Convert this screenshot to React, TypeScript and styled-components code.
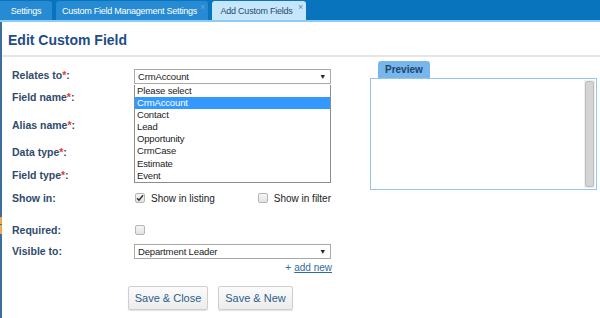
import React from "react";
import styled, { createGlobalStyle } from "styled-components";

const GlobalStyle = createGlobalStyle`
    body {
        margin: 0;
        font-family: "Liberation Sans", Arial, sans-serif;
        background: #ffffff;
    }
`;

const Page = styled.div`
    width: 600px;
    height: 318px;
    overflow: hidden;
    display: flex;
    flex-direction: column;
`;

const TabBar = styled.div`
    height: 20px;
    background: #0874bd;
    display: flex;
    align-items: flex-end;
    gap: 4px;
    border-bottom: 2px solid #8ccbf3;
`;

const Tab = styled.div<{ $active?: boolean; $w: number; $close?: boolean }>`
    width: ${(p) => p.$w}px;
    height: 19px;
    padding: ${(p) => (p.$close ? "1px 5px 0 0" : "1px 0 0 0")};
    box-sizing: border-box;
    display: flex;
    align-items: center;
    justify-content: center;
    position: relative;
    border-radius: 3px 3px 0 0;
    font-size: 9px;
    letter-spacing: -0.25px;
    white-space: nowrap;
    color: ${(p) => (p.$active ? "#2b4a6b" : "#ffffff")};
    background: ${(p) => (p.$active ? "#c6e7fb" : "#268bd2")};
    &:first-child {
        border-radius: 0 3px 0 0;
    }
`;

const TabClose = styled.span<{ $active?: boolean }>`
    position: absolute;
    top: 1px;
    right: 3px;
    font-size: 9px;
    color: ${(p) => (p.$active ? "#5d8ab0" : "#6aa7d6")};
`;

const Main = styled.div`
    flex: 1;
    border-left: 2px solid;
    border-image: linear-gradient(
            to bottom,
            #3d6d9c 0 195px,
            #f0a848 195px 202px,
            #3d6d9c 202px 203px,
            #f0a848 203px 212px,
            #3d6d9c 212px
        )
        1;
    display: flex;
    flex-direction: column;
`;

const Header = styled.div`
    height: 35px;
    box-sizing: border-box;
    padding: 2px 0 0 6px;
    border-bottom: 2px solid #e6e6e6;
    display: flex;
    align-items: center;
`;

const Title = styled.h1`
    margin: 0;
    font-size: 14px;
    font-weight: bold;
    color: #1f4d86;
`;

const Body = styled.div`
    display: grid;
    grid-template-columns: 358px 227px;
    padding-left: 10px;
`;

const Form = styled.div`
    display: flex;
    flex-direction: column;
    padding-top: 7px;
    position: relative;
`;

const Row = styled.div<{ $h: number; $mt?: number }>`
    height: ${(p) => p.$h}px;
    margin-top: ${(p) => p.$mt ?? 0}px;
    display: grid;
    grid-template-columns: 122px 197px;
    align-items: center;
`;

const Label = styled.label`
    font-size: 10.5px;
    font-weight: bold;
    color: #2f4b6b;
`;

const Star = styled.span`
    color: #e8352e;
`;

const Select = styled.div<{ $w?: number; $mt?: number }>`
    width: ${(p) => p.$w ?? 197}px;
    height: 15px;
    margin-top: ${(p) => p.$mt ?? 0}px;
    box-sizing: border-box;
    border: 1px solid #a9a9a9;
    background: #ffffff;
    display: flex;
    align-items: center;
    justify-content: space-between;
    padding: 0 4px 0 3px;
    font-size: 9.5px;
    letter-spacing: -0.15px;
    color: #222;
`;

const Arrow = styled.span`
    font-size: 7px;
    color: #222;
`;

const TextInput = styled.div`
    width: 197px;
    height: 15px;
    box-sizing: border-box;
    border: 1px solid #a9a9a9;
`;

const DropList = styled.ul`
    position: absolute;
    top: 28px;
    left: 122px;
    width: 197px;
    box-sizing: border-box;
    margin: 0;
    padding: 0;
    list-style: none;
    background: #ffffff;
    border: 1px solid #8c8c8c;
    border-top: none;
    z-index: 2;
`;

const DropItem = styled.li<{ $sel?: boolean }>`
    height: 12.1px;
    line-height: 12px;
    padding-left: 2px;
    font-size: 9.5px;
    letter-spacing: -0.15px;
    color: ${(p) => (p.$sel ? "#ffffff" : "#222")};
    background: ${(p) => (p.$sel ? "#3399ff" : "transparent")};
`;

const Checks = styled.div`
    display: flex;
    align-items: center;
    justify-content: space-between;
`;

const CheckLabel = styled.span`
    display: flex;
    align-items: center;
    gap: 6px;
    font-size: 10px;
    color: #222;
`;

const Box = styled.span`
    width: 10px;
    height: 10px;
    box-sizing: border-box;
    border: 1px solid #b5b5b5;
    border-radius: 2px;
    background: linear-gradient(#f6f6f6, #e2e2e2);
    display: inline-flex;
    align-items: center;
    justify-content: center;
    margin-left: 1px;
`;

const AddNew = styled.div`
    height: 12px;
    width: 320px;
    display: flex;
    align-items: center;
    justify-content: flex-end;
    gap: 3px;
    font-size: 10px;
    color: #2f6b9f;
    span:last-child {
        text-decoration: underline;
    }
`;

const Buttons = styled.div`
    display: flex;
    gap: 10px;
    margin-top: 13px;
    padding-left: 116px;
`;

const Button = styled.button<{ $w: number }>`
    width: ${(p) => p.$w}px;
    height: 24px;
    font-family: "Liberation Sans", Arial, sans-serif;
    font-size: 11px;
    color: #2e5e8e;
    border: 1px solid #cfcfcf;
    border-radius: 2px;
    background: linear-gradient(#fbfbfb, #ececec);
    box-shadow: 0 1px 1px rgba(0, 0, 0, 0.12);
    padding: 0;
`;

const Preview = styled.div`
    display: flex;
    flex-direction: column;
    padding-top: 4px;
`;

const PreviewTab = styled.div`
    align-self: flex-start;
    margin-left: 8px;
    height: 17px;
    padding: 0 7px;
    display: flex;
    align-items: center;
    background: #79b6ec;
    border-radius: 3px 3px 0 0;
    font-size: 10px;
    font-weight: bold;
    color: #1c4670;
`;

const PreviewBox = styled.div`
    height: 112px;
    box-sizing: border-box;
    border: 1px solid #92c6f3;
    display: flex;
    justify-content: flex-end;
    padding: 1px;
`;

const Track = styled.div`
    width: 11px;
    background: #f0f0f0;
    display: flex;
    padding: 1px;
    box-sizing: border-box;
`;

const Thumb = styled.div`
    flex: 1;
    background: #d4d4d4;
    border: 1px solid #bdbdbd;
    border-radius: 2px;
`;

const options = ["Please select", "CrmAccount", "Contact", "Lead", "Opportunity", "CrmCase", "Estimate", "Event"];

function Check() {
    return (
        <svg width="8" height="8" viewBox="0 0 8 8">
            <path d="M1 4.2 L3 6.3 L7 1.2" stroke="#333" strokeWidth="1.4" fill="none" />
        </svg>
    );
}

export default function App() {
    return (
        <Page>
            <GlobalStyle />
            <TabBar>
                <Tab $w={52}>Settings</Tab>
                <Tab $w={152} $close>
                    Custom Field Management Settings
                    <TabClose>×</TabClose>
                </Tab>
                <Tab $w={94} $active $close>
                    Add Custom Fields
                    <TabClose $active>×</TabClose>
                </Tab>
            </TabBar>
            <Main>
                <Header>
                    <Title>Edit Custom Field</Title>
                </Header>
                <Body>
                    <Form>
                        <Row $h={22}>
                            <Label>Relates to<Star>*</Star>:</Label>
                            <Select $mt={3}>
                                CrmAccount<Arrow>▼</Arrow>
                            </Select>
                        </Row>
                        <Row $h={22}>
                            <Label>Field name<Star>*</Star>:</Label>
                            <TextInput />
                        </Row>
                        <Row $h={33}>
                            <Label>Alias name<Star>*</Star>:</Label>
                            <TextInput />
                        </Row>
                        <Row $h={22}>
                            <Label>Data type<Star>*</Star>:</Label>
                            <Select $w={86} />
                        </Row>
                        <Row $h={23}>
                            <Label>Field type<Star>*</Star>:</Label>
                            <Select $w={86} />
                        </Row>
                        <Row $h={24}>
                            <Label>Show in:</Label>
                            <Checks>
                                <CheckLabel>
                                    <Box>
                                        <Check />
                                    </Box>
                                    Show in listing
                                </CheckLabel>
                                <CheckLabel>
                                    <Box />
                                    Show in filter
                                </CheckLabel>
                            </Checks>
                        </Row>
                        <Row $h={22} $mt={9}>
                            <Label>Required:</Label>
                            <Checks>
                                <Box />
                            </Checks>
                        </Row>
                        <Row $h={20}>
                            <Label>Visible to:</Label>
                            <Select>
                                Department Leader<Arrow>▼</Arrow>
                            </Select>
                        </Row>
                        <AddNew>
                            <span>+</span>
                            <span>add new</span>
                        </AddNew>
                        <Buttons>
                            <Button $w={80}>Save &amp; Close</Button>
                            <Button $w={75}>Save &amp; New</Button>
                        </Buttons>
                        <DropList>
                            {options.map((o) => (
                                <DropItem key={o} $sel={o === "CrmAccount"}>
                                    {o}
                                </DropItem>
                            ))}
                        </DropList>
                    </Form>
                    <Preview>
                        <PreviewTab>Preview</PreviewTab>
                        <PreviewBox>
                            <Track>
                                <Thumb />
                            </Track>
                        </PreviewBox>
                    </Preview>
                </Body>
            </Main>
        </Page>
    );
}
